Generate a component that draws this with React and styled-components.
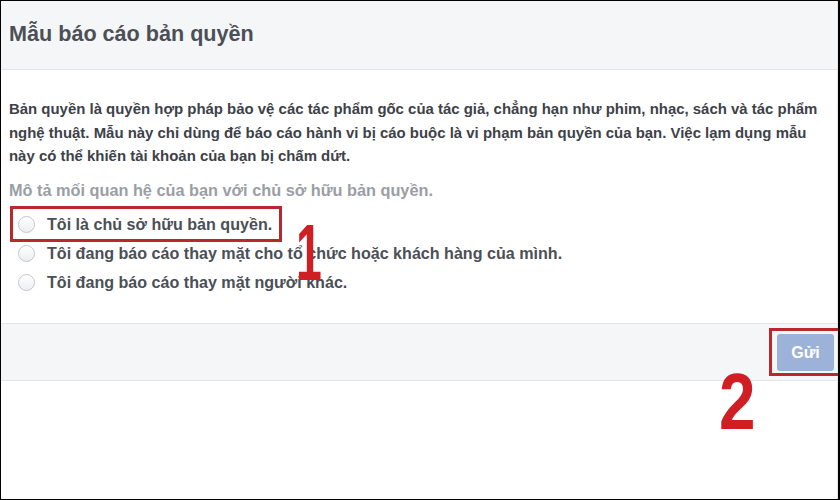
import React from "react";
import styled, { createGlobalStyle } from "styled-components";

const Global = createGlobalStyle`
  html, body { margin: 0; padding: 0; background: #fff; }
  body { font-family: "Liberation Sans", Arial, Helvetica, sans-serif; }
  * { box-sizing: border-box; }
`;

const Frame = styled.div`
  position: relative;
  width: 840px;
  height: 500px;
  border-top: 1px solid #000;
  border-left: 1px solid #000;
  border-bottom: 1px solid #000;
  border-right: 2px solid #000;
  background: #fff;
  overflow: hidden;
`;

const Dialog = styled.div`
  height: 100%;
  border-right: 1px solid #e4e6e9;
  display: flex;
  flex-direction: column;
`;

const Header = styled.div`
  height: 69px;
  background: #f5f6f7;
  border-bottom: 1px solid #e2e4e7;
  display: flex;
  align-items: center;
  padding: 0 0 2px 8px;
`;

const Title = styled.h1`
  margin: 0;
  font-size: 21.6px;
  font-weight: bold;
  color: #4b4f56;
`;

const Body = styled.div`
  padding: 27px 8px 0 8px;
  height: 253px;
`;

const Intro = styled.p`
  margin: 0;
  font-size: 14.95px;
  line-height: 23.5px;
  font-weight: bold;
  color: #3d4148;
`;

const Prompt = styled.div`
  margin-top: 13px;
  font-size: 16.3px;
  font-weight: bold;
  color: #9a9ea5;
`;

const Options = styled.div`
  margin-top: 10px;
  display: flex;
  flex-direction: column;
`;

const Option = styled.label`
  position: relative;
  display: flex;
  align-items: center;
  gap: 12px;
  height: 29px;
  padding-left: 9px;
  font-size: 16.1px;
  font-weight: bold;
  color: #4b4f56;
`;

const Radio = styled.span`
  width: 17px;
  height: 17px;
  border-radius: 50%;
  border: 1px solid #c4c7cc;
  background: linear-gradient(#fff, #eceef0);
  box-shadow: inset 0 1px 1px rgba(255,255,255,0.9);
  flex: none;
`;

const Highlight = styled.span`
  position: absolute;
  left: 1px;
  top: -4px;
  width: 272px;
  height: 36px;
  border: 3px solid #b8282c;
  pointer-events: none;
`;

const Footer = styled.div`
  height: 58px;
  background: #f5f6f7;
  border-top: 1px solid #e2e4e7;
  border-bottom: 1px solid #e2e4e7;
  display: flex;
  align-items: center;
  justify-content: flex-end;
  padding-right: 3px;
`;

const ButtonWrap = styled.div`
  position: relative;
`;

const SubmitButton = styled.button`
  width: 57px;
  height: 37px;
  border: none;
  border-radius: 3px;
  background: #9db2d8;
  color: #fff;
  font-family: "Liberation Sans", Arial, sans-serif;
  font-size: 16px;
  font-weight: bold;
  margin-top: 1px;
`;

const ButtonHighlight = styled.span`
  position: absolute;
  left: -8px;
  top: -5px;
  width: 76px;
  height: 48px;
  border: 3px solid #b8282c;
  pointer-events: none;
`;

const Marker = styled.span`
  position: absolute;
  left: ${(p) => p.x}px;
  top: ${(p) => p.y}px;
  font-family: "Liberation Sans", Arial, sans-serif;
  font-weight: bold;
  font-size: ${(p) => p.size}px;
  line-height: 1;
  color: #d01f24;
  transform: scaleX(${(p) => p.sx});
  transform-origin: left top;
`;

export default function App() {
  return (
    <>
      <Global />
      <Frame>
        <Dialog>
          <Header>
            <Title>Mẫu báo cáo bản quyền</Title>
          </Header>
          <Body>
            <Intro>
              Bản quyền là quyền hợp pháp bảo vệ các tác phẩm gốc của tác giả, chẳng hạn như phim, nhạc, sách và tác phẩm nghệ thuật. Mẫu này chỉ dùng để báo cáo hành vi bị cáo buộc là vi phạm bản quyền của bạn. Việc lạm dụng mẫu này có thể khiến tài khoản của bạn bị chấm dứt.
            </Intro>
            <Prompt>Mô tả mối quan hệ của bạn với chủ sở hữu bản quyền.</Prompt>
            <Options>
              <Option>
                <Radio />
                Tôi là chủ sở hữu bản quyền.
                <Highlight />
              </Option>
              <Option>
                <Radio />
                Tôi đang báo cáo thay mặt cho tổ chức hoặc khách hàng của mình.
              </Option>
              <Option>
                <Radio />
                Tôi đang báo cáo thay mặt người khác.
              </Option>
            </Options>
          </Body>
          <Footer>
            <ButtonWrap>
              <SubmitButton>Gửi</SubmitButton>
              <ButtonHighlight />
            </ButtonWrap>
          </Footer>
        </Dialog>
        <Marker x={295} y={212} size={80} sx={0.58}>1</Marker>
        <Marker x={718} y={361} size={80} sx={0.82}>2</Marker>
      </Frame>
    </>
  );
}
